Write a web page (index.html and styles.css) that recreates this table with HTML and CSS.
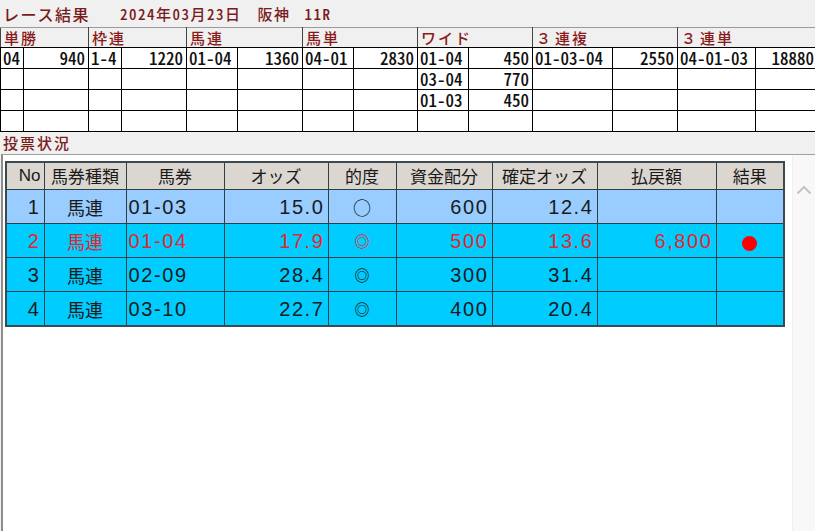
FILE: index.html
```html
<!DOCTYPE html>
<html lang="ja">
<head>
<meta charset="utf-8">
<title>レース結果</title>
<link rel="stylesheet" href="styles.css">
</head>
<body>
<div class="title">
  <span class="t-name">レース結果</span>
  <span class="t-date">2024年03月23日</span>
  <span class="t-place">阪神</span>
  <span class="t-race">11R</span>
</div>
<table class="res">
  <colgroup>
    <col class="c23"><col class="c65"><col class="c33"><col class="c65">
    <col class="c51"><col class="c65"><col class="c51"><col class="c64">
    <col class="c51"><col class="c64"><col class="c80"><col class="c65">
    <col class="c78"><col class="c62">
  </colgroup>
  <tr class="hd">
    <th colspan="2">単勝</th><th colspan="2">枠連</th><th colspan="2">馬連</th><th colspan="2">馬単</th>
    <th colspan="2">ワイド</th><th colspan="2"><span class="fw">３</span>連複</th><th colspan="2"><span class="fw">３</span>連単</th>
  </tr>
  <tr>
    <td>04</td><td class="n">940</td><td>1-4</td><td class="n">1220</td><td>01-04</td><td class="n">1360</td><td>04-01</td><td class="n">2830</td>
    <td>01-04</td><td class="n">450</td><td>01-03-04</td><td class="n">2550</td><td>04-01-03</td><td class="n">18880</td>
  </tr>
  <tr>
    <td></td><td></td><td></td><td></td><td></td><td></td><td></td><td></td>
    <td>03-04</td><td class="n">770</td><td></td><td></td><td></td><td></td>
  </tr>
  <tr>
    <td></td><td></td><td></td><td></td><td></td><td></td><td></td><td></td>
    <td>01-03</td><td class="n">450</td><td></td><td></td><td></td><td></td>
  </tr>
  <tr>
    <td></td><td></td><td></td><td></td><td></td><td></td><td></td><td></td>
    <td></td><td></td><td></td><td></td><td></td><td></td>
  </tr>
</table>
<div class="sub">投票状況</div>
<div class="panel">
  <div class="main">
    <table class="bets">
      <colgroup>
        <col class="b38"><col class="b82"><col class="b98"><col class="b104"><col class="b68">
        <col class="b96"><col class="b105"><col class="b119"><col class="b68">
      </colgroup>
      <tr class="bh">
        <th class="no">No</th><th>馬券種類</th><th>馬券</th><th>オッズ</th><th>的度</th><th>資金配分</th><th>確定オッズ</th><th>払戻額</th><th>結果</th>
      </tr>
      <tr class="r1">
        <td class="num">1</td><td class="jp">馬連</td><td class="code">01-03</td><td class="num">15.0</td><td class="mk">○</td><td class="num">600</td><td class="num">12.4</td><td class="num"></td><td></td>
      </tr>
      <tr class="r2 hit">
        <td class="num">2</td><td class="jp">馬連</td><td class="code">01-04</td><td class="num">17.9</td><td class="mk dbl">◎</td><td class="num">500</td><td class="num">13.6</td><td class="num">6,800</td><td class="dotc"><span class="dot"></span></td>
      </tr>
      <tr class="r2">
        <td class="num">3</td><td class="jp">馬連</td><td class="code">02-09</td><td class="num">28.4</td><td class="mk dbl">◎</td><td class="num">300</td><td class="num">31.4</td><td class="num"></td><td></td>
      </tr>
      <tr class="r2">
        <td class="num">4</td><td class="jp">馬連</td><td class="code">03-10</td><td class="num">22.7</td><td class="mk dbl">◎</td><td class="num">400</td><td class="num">20.4</td><td class="num"></td><td></td>
      </tr>
    </table>
  </div>
  <div class="scroll">
    <svg class="chev" width="16" height="10" viewBox="0 0 16 10"><path d="M1.5 8.5 L8 2 L14.5 8.5" fill="none" stroke="#c4c4c4" stroke-width="2"/></svg>
  </div>
</div>
</body>
</html>
```
FILE: styles.css
```css
html, body {
  margin: 0;
  padding: 0;
  width: 815px;
  height: 531px;
  overflow: hidden;
  background: #f0f0f0;
}
body {
  display: flex;
  flex-direction: column;
  font-family: "Noto Sans CJK JP", sans-serif;
}
.title {
  height: 27px;
  display: flex;
  align-items: center;
  padding-left: 3px;
  color: #7a1c1c;
  white-space: nowrap;
  font-weight: 500;
  font-feature-settings: "hwid" 1;
}
.t-name {
  font-size: 16px;
  letter-spacing: 1.6px;
  width: 117px;
}
.t-date {
  font-size: 15px;
  letter-spacing: 1.5px;
  margin-right: 16px;
}
.t-place {
  font-size: 15px;
  letter-spacing: 1.5px;
  margin-right: 14px;
}
.t-race {
  font-size: 15px;
  letter-spacing: 1.5px;
}

/* results table */
.res {
  border-collapse: collapse;
  table-layout: fixed;
  width: 817px;
  flex: none;
  font-family: "Noto Sans CJK JP", monospace;
  font-feature-settings: "hwid" 1;
  font-size: 17px;
  font-weight: 500;
  color: #111;
}
.c23 { width: 23px; } .c65 { width: 65px; } .c33 { width: 33px; }
.c51 { width: 51px; } .c64 { width: 64px; } .c80 { width: 80px; }
.c78 { width: 78px; } .c62 { width: 62px; }
.res th, .res td {
  border: 1px solid #000;
  height: 20px;
  padding: 0 2px;
  line-height: 20px;
  white-space: nowrap;
  text-align: left;
  background: #fff;
}
.res .hd th {
  background: #f0f0f0;
  border-top: 1px solid #9a9a9a;
  border-left: 1px solid #444;
  border-right: 1px solid #444;
  color: #8a1a1a;
  font-size: 15px;
  font-weight: 500;
  letter-spacing: 2px;
  padding-left: 3px;
  height: 19px;
  line-height: 19px;
}
.res .hd .fw {
  font-feature-settings: normal;
  margin-right: 2px;
}
.res td.n {
  text-align: right;
  padding-right: 3px;
}

.sub {
  height: 22px;
  line-height: 22px;
  padding-left: 3px;
  font-size: 15px;
  font-weight: 500;
  letter-spacing: 2px;
  color: #7a1c1c;
  flex: none;
}

.panel {
  flex: 1;
  display: flex;
  margin-left: 1px;
  border-top: 1px solid #a0a0a0;
  border-left: 2px solid #8c8c8c;
  background: #fff;
}
.main {
  flex: 1;
  padding: 6px 0 0 2px;
}
.scroll {
  width: 22px;
  flex: none;
  background: #f8f8f8;
  border-left: 1px solid #f0f0f0;
}
.chev {
  display: block;
  margin: 30px 0 0 3px;
}

/* bets table */
.bets {
  border-collapse: collapse;
  table-layout: fixed;
  width: 778px;
  border: 2px solid #3c4a50;
  color: #1a1a1a;
}
.b38 { width: 38px; } .b82 { width: 82px; } .b98 { width: 98px; }
.b104 { width: 104px; } .b68 { width: 68px; } .b96 { width: 96px; }
.b105 { width: 105px; } .b119 { width: 119px; }
.bets th, .bets td {
  border: 1px solid #2e3f46;
  padding: 0;
  white-space: nowrap;
}
.bets .bh th {
  background: #dbd7d0;
  height: 26px;
  font-size: 17px;
  font-weight: normal;
  text-align: center;
  line-height: 24px;
}
.bets .bh th.no {
  font-family: "Liberation Sans", Arial, sans-serif;
  font-size: 17px;
  text-align: right;
  padding-right: 3px;
}
.bets td {
  height: 33px;
  line-height: 30px;
}
.r1 td { background: #99ccff; }
.r2 td { background: #00ccff; }
.hit td { color: #e0282e; }
.bets td.num {
  font-family: "Liberation Sans", Arial, sans-serif;
  font-size: 20px;
  letter-spacing: 1.6px;
  text-align: right;
  padding-right: 3px;
}
.bets td.code {
  font-family: "Liberation Sans", Arial, sans-serif;
  font-size: 20px;
  letter-spacing: 1.6px;
  padding-left: 2px;
}
.bets td.jp {
  font-size: 18px;
  text-align: center;
}
.bets td.mk {
  font-size: 18px;
  text-align: center;
}
.bets td.mk.dbl {
  font-size: 15px;
  font-weight: 700;
}
.bets td.dotc {
  text-align: center;
}
.dot {
  display: inline-block;
  width: 15px;
  height: 15px;
  border-radius: 50%;
  background: #ff0000;
  vertical-align: middle;
}
```
